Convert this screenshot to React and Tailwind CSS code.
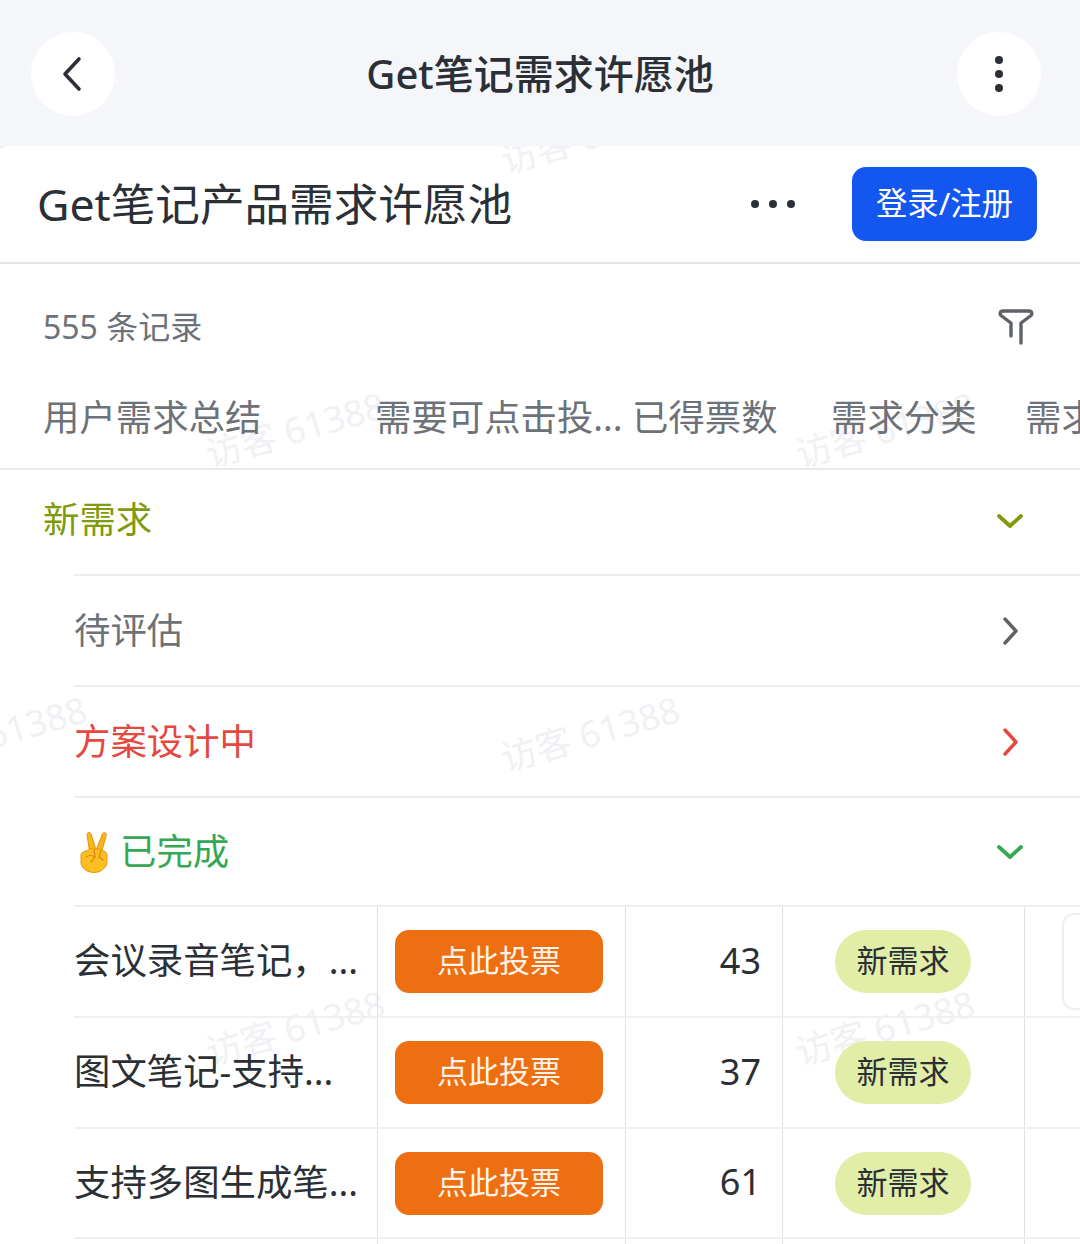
const marks = [
  { x: 'left-[-95px]', y: 'top-[118px]' },
  { x: 'left-[498px]', y: 'top-[118px]' },
  { x: 'left-[203px]', y: 'top-[412px]' },
  { x: 'left-[793px]', y: 'top-[412px]' },
  { x: 'left-[-95px]', y: 'top-[716px]' },
  { x: 'left-[498px]', y: 'top-[716px]' },
  { x: 'left-[203px]', y: 'top-[1010px]' },
  { x: 'left-[793px]', y: 'top-[1010px]' },
];

const rows = [
  { title: '会议录音笔记，...', votes: 43, height: 'h-[111px]' },
  { title: '图文笔记-支持...', votes: 37, height: 'h-[111px]' },
  { title: '支持多图生成笔...', votes: 61, height: 'h-[110px]' },
];

const Chevron = ({ dir, color }) => {
  if (dir === 'down') {
    return (
      <svg width="28" height="18" viewBox="0 0 28 18" fill="none" stroke={color} strokeWidth="3.8" strokeLinecap="round" strokeLinejoin="round">
        <path d="M3 4 14 14 25 4" />
      </svg>
    );
  }
  return (
    <svg width="18" height="30" viewBox="0 0 18 30" fill="none" stroke={color} strokeWidth="3.4" strokeLinecap="round" strokeLinejoin="round">
      <path d="M4 3 15 15 4 27" />
    </svg>
  );
};

const GroupRow = ({ line, height, chevron, children }) => (
  <div className={`flex items-center justify-between pr-[56px] ${height} ${line}`}>
    <div className="flex items-center text-[36.4px] leading-none">{children}</div>
    <div className="flex w-[28px] justify-center">{chevron}</div>
  </div>
);

const VictoryHand = () => (
  <svg width="34" height="44" viewBox="0 0 34 44" className="ml-[4px] mr-[8px]">
    <path d="M12 24 9 5c-.4-2.600 3.400-3.600 4.200-.8L18 20 24.500 4c1-2.500 4.500-1.300 3.800 1.300L23 24z" fill="#f8b61e" stroke="#e8920c" strokeWidth="1" />
    <path d="M3 25c0-2 3-4 6-4 2-3 5-3 7-1.500 3-1.500 6-.5 7.500 1 3 0 5.500 2 5.500 5v6c0 6-6 11-13 11S3 38 3 32z" fill="#fbbf24" stroke="#e8920c" strokeWidth="1" />
    <path d="M8 27c3-2 6-2 9 0M16 20l1 7-4 5M23 21l-2 6 4 3" fill="none" stroke="#d9820a" strokeWidth="1.200" strokeLinecap="round" />
  </svg>
);

export default function App() {
  return (
    <div className="relative h-[1244px] w-[1080px] overflow-hidden bg-white font-['Noto_Sans','Noto_Sans_CJK_SC',sans-serif] text-[#2b2f36]">
      {marks.map((m, i) => (
        <div key={i} className={`absolute ${m.x} ${m.y} -rotate-[16deg] whitespace-nowrap text-[36px] leading-none text-[#f0f1f4]`}>
          访客 61388
        </div>
      ))}

      <div className="relative">
        <div className="flex h-[146px] items-center justify-between bg-[#f4f6fa] px-[39px] pt-[2px]">
          <button className="flex size-[84px] -translate-x-[8px] items-center justify-center rounded-full bg-white">
            <svg width="24" height="36" viewBox="0 0 24 36" fill="none" stroke="#2b2f36" strokeWidth="3.6" strokeLinecap="round" strokeLinejoin="round" className="-translate-x-[1px]">
              <path d="M19 3 5 18 19 33" />
            </svg>
          </button>
          <div className="text-[40px] font-medium leading-none">Get笔记需求许愿池</div>
          <button className="flex size-[84px] flex-col items-center justify-center gap-[6px] rounded-full bg-white">
            <span className="size-[8px] rounded-full bg-[#2b2f36]" />
            <span className="size-[8px] rounded-full bg-[#2b2f36]" />
            <span className="size-[8px] rounded-full bg-[#2b2f36]" />
          </button>
        </div>

        <div className="flex h-[118px] items-center border-b-2 border-[#e4e5e7] pl-[37px] pr-[43px]">
          <div className="flex-1 text-[44.6px] leading-none">Get笔记产品需求许愿池</div>
          <div className="mr-[57px] flex gap-[10px]">
            <span className="size-[8px] rounded-full bg-[#2b2f36]" />
            <span className="size-[8px] rounded-full bg-[#2b2f36]" />
            <span className="size-[8px] rounded-full bg-[#2b2f36]" />
          </div>
          <button className="flex h-[74px] w-[185px] items-center justify-center rounded-[14px] bg-[#1456f0] pb-[2px] text-[31.4px] text-white">
            登录/注册
          </button>
        </div>

        <div className="flex h-[124px] items-center justify-between pl-[43px] pr-[46px] pt-[2px] text-[32px] leading-none text-[#6d7278]">
          <span>555 条记录</span>
          <svg width="36" height="38" viewBox="0 0 36 38" fill="none" stroke="#5f6368" strokeWidth="3.4" strokeLinecap="round" strokeLinejoin="round">
            <path d="M13 28V15L3 7.500C1.500 6 2 3 5 3h26c3 0 3.500 3 2 4.500L23 15v20" />
          </svg>
        </div>

        <div className="grid h-[82px] grid-cols-[332px_257px_199px_194px_1fr] items-start whitespace-nowrap border-b-2 border-[#e8e9eb] pl-[43px] pt-[11px] text-[36.4px] leading-none text-[#6d7278]">
          <span>用户需求总结</span>
          <span>需要可点击投...</span>
          <span>已得票数</span>
          <span>需求分类</span>
          <span>需求状态</span>
        </div>

        <div className="flex h-[104px] items-center justify-between pl-[43px] pr-[56px] text-[36.4px] leading-none text-[#7f9a0a]">
          <span className="-translate-y-[3px]">新需求</span>
          <div className="flex w-[28px] -translate-y-[1px] justify-center">
            <Chevron dir="down" color="#7f9a0a" />
          </div>
        </div>
        <div className="ml-[74px]">
          <GroupRow height="h-[111px]" line="border-t-2 border-[#eceded]" chevron={<Chevron color="#5f6368" />}>
            <span className="text-[#6d7278]">待评估</span>
          </GroupRow>
          <GroupRow height="h-[111px]" line="border-t-2 border-[#eceded]" chevron={<Chevron color="#e5483f" />}>
            <span className="text-[#e5483f]">方案设计中</span>
          </GroupRow>
          <GroupRow height="h-[109px]" line="border-t-2 border-[#eceded]" chevron={<Chevron dir="down" color="#34a853" />}>
            <VictoryHand />
            <span className="text-[#34a853]">已完成</span>
          </GroupRow>

          {rows.map((row, i) => (
            <div key={row.votes} className={`grid grid-cols-[303px_248px_157px_242px_1fr] border-t-2 border-[#eff0f1] ${row.height}`}>
              <div className="flex items-center whitespace-nowrap pb-[2px] text-[36.4px] leading-none">{row.title}</div>
              <div className="flex items-center border-l border-[#dfe0e3] pl-[17px]">
                <button className="flex h-[63px] w-[208px] items-center justify-center rounded-[14px] bg-[#ee6e12] pb-[2px] text-[31px] text-[#fdf3ea]">
                  点此投票
                </button>
              </div>
              <div className="flex items-center justify-end border-l border-[#dfe0e3] pb-[2px] pr-[21px] text-[36px] leading-none">{row.votes}</div>
              <div className="flex items-center border-l border-[#dfe0e3] pl-[52px]">
                <span className="flex h-[63px] w-[136px] items-center justify-center rounded-full bg-[#e2eea8] pb-[2px] text-[31px]">新需求</span>
              </div>
              <div className="flex items-center border-l border-[#dfe0e3] pl-[37px]">
                {i === 0 && <div className="h-[97px] w-[40px] rounded-[12px] border-2 border-[#eeeff1]" />}
              </div>
            </div>
          ))}
          <div className="grid h-[20px] grid-cols-[303px_248px_157px_242px_1fr] border-t-2 border-[#eff0f1]">
            <div />
            <div className="border-l border-[#dfe0e3]" />
            <div className="border-l border-[#dfe0e3]" />
            <div className="border-l border-[#dfe0e3]" />
            <div className="border-l border-[#dfe0e3]" />
          </div>
        </div>
      </div>
    </div>
  );
}
